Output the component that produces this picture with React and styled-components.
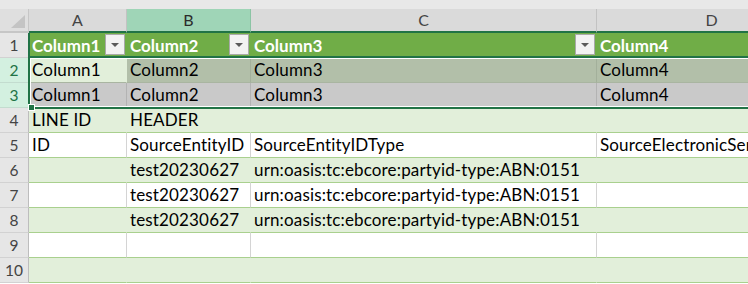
import React from 'react'
import styled, { createGlobalStyle } from 'styled-components'

const GlobalStyle = createGlobalStyle`
  html, body {
    margin: 0;
    padding: 0;
    background: #ffffff;
    overflow: hidden;
  }
  body {
    font-family: Lato, "Open Sans", sans-serif;
  }
`

const COLS = '29px 98px 124px 346px 230px'

const Sheet = styled.div`
  position: relative;
  width: 748px;
  height: 284px;
  overflow: hidden;
  background: #ffffff;
`

const TopBand = styled.div`
  height: 9px;
  background: #e8e8e8;
`

const Row = styled.div`
  display: grid;
  grid-template-columns: ${COLS};
  height: ${p => p.$h || 25}px;
`

const Corner = styled.div`
  position: relative;
  background: #dfdfdf;
  border-right: 1px solid #c6c6c6;
  border-bottom: 2px solid #c6c6c6;

  &::after {
    content: '';
    position: absolute;
    right: 3px;
    bottom: 3px;
    width: 0;
    height: 0;
    border-left: 14px solid transparent;
    border-bottom: 13px solid #c4c4c4;
  }
`

const ColHead = styled.div`
  background: ${p => (p.$active ? '#9fd5b7' : '#dadada')};
  color: ${p => (p.$active ? '#2b2b2b' : '#444444')};
  border-right: 1px solid ${p => (p.$active ? '#8bc4a4' : '#c2c2c2')};
  border-bottom: 2px solid #217346;
  text-align: center;
  font-size: 16px;
  line-height: 22px;
`

const RowHead = styled.div`
  background: ${p => (p.$sel ? '#d3f0e0' : '#e6e6e6')};
  color: ${p => (p.$sel ? '#217346' : '#444444')};
  border-right: 1px solid ${p => (p.$edge ? '#217346' : '#bdbdbd')};
  border-bottom: 1px solid ${p => (p.$sel ? '#c3dccf' : '#d2d2d2')};
  text-align: center;
  font-size: 15.5px;
  line-height: 24px;
`

const Cell = styled.div`
  position: relative;
  background: ${p => p.$bg || '#ffffff'};
  border-right: 1px solid ${p => p.$v || p.$bg || '#d4d4d4'};
  border-bottom: 1px solid ${p => p.$h || '#a9d08e'};
  color: #000000;
  font-size: 17px;
  letter-spacing: 0.15px;
  line-height: 24px;
  padding-left: 3px;
  white-space: nowrap;
  overflow: hidden;
`

const HeadCell = styled(Cell)`
  background: #70ad47;
  border-right-color: #70ad47;
  border-bottom-color: #217346;
  color: #ffffff;
  font-weight: 700;
  letter-spacing: 0;
  padding-top: 1px;
  line-height: 23px;
  box-shadow: ${p => (p.$first ? 'inset 1px 0 #217346' : 'none')};
`

const FilterButton = styled.span`
  position: absolute;
  right: 1px;
  top: 1px;
  width: 20px;
  height: 21px;
  box-sizing: border-box;
  background: #f2f2f2;
  border: 1px solid #a9a9a9;
  display: flex;
  align-items: center;
  justify-content: center;

  &::before {
    content: '';
    width: 0;
    height: 0;
    border-left: 4px solid transparent;
    border-right: 4px solid transparent;
    border-top: 4px solid #5a5a5a;
  }
`

const Selection = styled.div`
  position: absolute;
  left: 28px;
  top: 56px;
  width: 740px;
  height: 53px;
  box-sizing: border-box;
  border: 2px solid #217346;
  border-right: none;
  box-shadow: inset 1px 1px 0 #ffffff, inset 0 -1px 0 #ffffff;
  pointer-events: none;
`

const FillHandle = styled.span`
  position: absolute;
  left: -2px;
  bottom: -4px;
  width: 5px;
  height: 5px;
  background: #217346;
  border: 1px solid #ffffff;
`

const GREEN = '#e2efda'
const SEL_GREEN = '#b2bfa9'
const SEL_GRAY = '#c9c9c9'

const body = [
  { n: 4, bg: GREEN, cells: ['LINE ID', 'HEADER', '', ''] },
  { n: 5, cells: ['ID', 'SourceEntityID', 'SourceEntityIDType', 'SourceElectronicServiceInterface'] },
  { n: 6, bg: GREEN, cells: ['', 'test20230627', 'urn:oasis:tc:ebcore:partyid-type:ABN:0151', ''] },
  { n: 7, cells: ['', 'test20230627', 'urn:oasis:tc:ebcore:partyid-type:ABN:0151', ''] },
  { n: 8, bg: GREEN, cells: ['', 'test20230627', 'urn:oasis:tc:ebcore:partyid-type:ABN:0151', ''] },
  { n: 9, cells: ['', '', '', ''] },
  { n: 10, bg: GREEN, cells: ['', '', '', ''] },
]

const names = ['Column1', 'Column2', 'Column3', 'Column4']

export default function App() {
  return (
    <Sheet>
      <GlobalStyle />
      <TopBand />
      <Row $h={24}>
        <Corner />
        <ColHead>A</ColHead>
        <ColHead $active>B</ColHead>
        <ColHead>C</ColHead>
        <ColHead>D</ColHead>
      </Row>

      <Row>
        <RowHead $edge>1</RowHead>
        {names.map((t, i) => (
          <HeadCell key={t} $first={i === 0}>
            {t}
            {i < 3 && <FilterButton />}
          </HeadCell>
        ))}
      </Row>

      <Row>
        <RowHead $sel $edge>2</RowHead>
        {names.map((t, i) => (
          <Cell key={t} $bg={i === 0 ? GREEN : SEL_GREEN} $v={i === 0 ? GREEN : '#a3b09b'} $h="#a9b5a1">
            {t}
          </Cell>
        ))}
      </Row>

      <Row>
        <RowHead $sel $edge>3</RowHead>
        {names.map(t => (
          <Cell key={t} $bg={SEL_GRAY} $v="#b3b3b3" $h="#217346">
            {t}
          </Cell>
        ))}
      </Row>

      {body.map(r => (
        <Row key={r.n}>
          <RowHead>{r.n}</RowHead>
          {r.cells.map((t, i) => (
            <Cell key={i} $bg={r.bg} $v={r.bg ? r.bg : '#d4d4d4'}>
              {t}
            </Cell>
          ))}
        </Row>
      ))}

      <Selection>
        <FillHandle />
      </Selection>
    </Sheet>
  )
}
